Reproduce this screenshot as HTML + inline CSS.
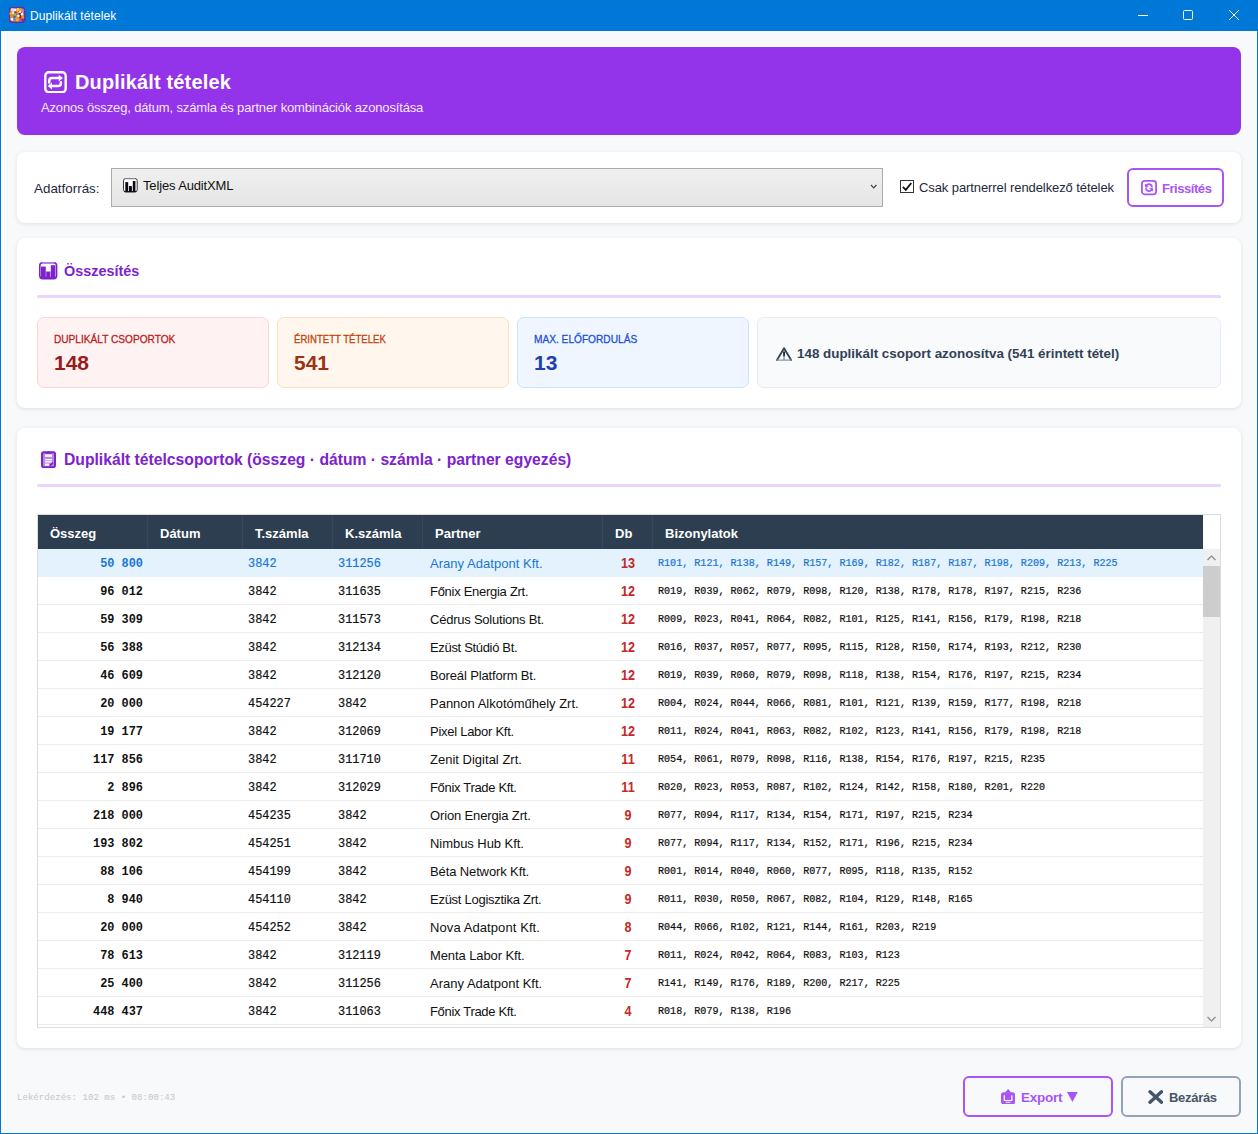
<!DOCTYPE html>
<html lang="hu"><head><meta charset="utf-8"><title>Duplikált tételek</title>
<style>
*{box-sizing:border-box;margin:0;padding:0}
html,body{width:1258px;height:1134px;overflow:hidden}
body{position:relative;background:#f8f9fa;font-family:"Liberation Sans",sans-serif;font-size:13px;color:#1e293b}
.abs{position:absolute}
.win{position:absolute;left:0;top:31px;width:1258px;height:1103px;border:1px solid #0078d7;border-top:none;box-shadow:inset 1px 0 0 #fff,inset -1px 0 0 #fff,inset 0 -1px 0 #fff;pointer-events:none}
.titlebar{position:absolute;left:0;top:0;width:1258px;height:31px;background:#0078d7;color:#fff}
.titlebar .t{position:absolute;left:30px;top:8px;font-size:12px;letter-spacing:.1px;line-height:16px;white-space:nowrap}
.hdr{position:absolute;left:17px;top:47px;width:1224px;height:88px;background:#9333ea;border-radius:8px}
.hdr h1{position:absolute;left:58px;top:22px;font-size:20px;letter-spacing:.15px;line-height:26px;font-weight:bold;color:#fff;white-space:nowrap}
.hdr .sub{position:absolute;left:24px;top:52px;font-size:13px;letter-spacing:-.15px;line-height:18px;color:#f3e8ff;white-space:nowrap}
.card{position:absolute;left:17px;width:1224px;background:#fff;border-radius:8px;box-shadow:0 1px 4px rgba(0,0,0,.1)}
.lbl{position:absolute;white-space:nowrap}
.combo{position:absolute;left:111px;top:168px;width:772px;height:39px;border:1px solid #acacac;background:linear-gradient(#f0f0f0,#e5e5e5)}
.sep{position:absolute;left:37px;width:1184px;height:3px;background:#e9d5ff;border-radius:2px}
.kpi{position:absolute;top:317px;height:71px;border-radius:7px;border:1px solid}
.kpi .l{position:absolute;left:16px;top:14px;font-size:11.6px;line-height:14px;font-weight:normal;white-space:nowrap;transform-origin:0 50%;-webkit-text-stroke:.3px currentColor}
.kpi .v{position:absolute;left:16px;top:32px;font-size:21px;line-height:26px;font-weight:bold;white-space:nowrap}
.h2{position:absolute;left:64px;font-size:15px;line-height:20px;font-weight:bold;color:#7e22ce;white-space:nowrap}
.tbl{position:absolute;left:37px;top:514px;width:1184px;height:514px;border:1px solid #dcdcdc;background:#fff;overflow:hidden}
.thead{position:absolute;left:0;top:0;width:1165px;height:34px;background:#2c3e50;color:#fff;font-weight:bold;font-size:13px}
.thead span{position:absolute;top:0;height:34px;line-height:38px;overflow:hidden;padding-left:12px;border-right:1px solid #34495e;white-space:nowrap}
.rows{position:absolute;left:0;top:34px;width:1165px}
.row{position:relative;height:28px;border-bottom:1px solid #ececec;line-height:27px;white-space:nowrap;color:#111}
.row.sel{background:#e3f2fd;color:#1976d2;border-bottom-color:#e3f2fd}
.row span{position:absolute;top:0}
.mono{font-family:"Liberation Mono",monospace}
.c1{top:2px !important;right:1060px;font-family:"Liberation Mono",monospace;font-weight:bold;font-size:11.9px}
.c3{top:2px !important;left:210px;font-family:"Liberation Mono",monospace;font-size:11.9px;-webkit-text-stroke:.2px currentColor}
.c4{top:2px !important;left:300px;font-family:"Liberation Mono",monospace;font-size:11.9px;-webkit-text-stroke:.2px currentColor}
.c5{top:1px !important;left:392px;font-size:13px}
.c6{top:1px !important;left:564px;width:52px;text-align:center;font-weight:bold;color:#c62828;font-size:14.5px;transform:scaleX(.87)}
.c7{top:1px !important;left:620px;font-family:"Liberation Mono",monospace;font-size:10.08px;-webkit-text-stroke:.2px currentColor}
.row.sel .c6{color:#c62828}
.sb{position:absolute;left:1165px;top:34px;width:17px;height:478px;background:#f0f0f0}
.sb .thumb{position:absolute;left:0;top:17px;width:17px;height:51px;background:#cdcdcd}
.btn{position:absolute;top:1076px;height:41px;border:2px solid;border-radius:6px;background:#f8f9fa;font-size:13px;font-weight:bold}
.btn .tx{position:absolute;top:10px;line-height:20px;white-space:nowrap}
.status{position:absolute;left:17px;top:1092px;font-family:"Liberation Mono",monospace;font-size:9.1px;line-height:12px;color:#c3c6cc;white-space:nowrap}

</style></head>
<body>
<div class="titlebar">
<svg class="abs" style="left:9px;top:7px" width="17" height="17" viewBox="-0.4 -0.5 17 17"><g><rect width="15.2" height="14.8" rx="3.2" fill="#e8872a"/><rect x="0" y="0" width="15.2" height="14.8" rx="3.2" fill="none" stroke="#6a2aa8" stroke-width="1.6"/><circle cx="3" cy="2.3" r="1.7" fill="#bfe3ff"/><circle cx="5.6" cy="2.6" r="1.5" fill="#e9f6ff"/><circle cx="8.6" cy="2" r="1.4" fill="#ffd43a"/><circle cx="11" cy="1.9" r="1.2" fill="#f7a21b"/><circle cx="13.3" cy="2.8" r="1.5" fill="#b07be0"/><circle cx="1.6" cy="6" r="1.6" fill="#f9a61c"/><circle cx="3.8" cy="5.3" r="1.4" fill="#d9f3ff"/><circle cx="6" cy="5" r="1.2" fill="#b0206e"/><circle cx="11.3" cy="4.8" r="1.8" fill="#f6e6e0"/><circle cx="12.1" cy="4.6" r="0.7" fill="#2a0b3f"/><circle cx="5.6" cy="7.2" r="1.4" fill="#9acb1e"/><circle cx="7.2" cy="6.9" r="0.9" fill="#1d8fe8"/><circle cx="10.5" cy="7" r="1.5" fill="#4a1148"/><circle cx="12.6" cy="6.8" r="1.3" fill="#ffffff"/><circle cx="9" cy="8.5" r="1.4" fill="#fff1c9"/><circle cx="2" cy="9.5" r="1.4" fill="#f08a1d"/><circle cx="5.2" cy="9.3" r="1.2" fill="#3a55e0"/><circle cx="7.6" cy="10.5" r="1.5" fill="#f7941d"/><circle cx="11" cy="9.8" r="1.3" fill="#8a2a2a"/><circle cx="13.4" cy="9.7" r="1.3" fill="#f39a3a"/><circle cx="2.8" cy="11.8" r="1.5" fill="#fbeff4"/><circle cx="5" cy="11.8" r="1.2" fill="#27a0f0"/><circle cx="8" cy="12.6" r="1.4" fill="#ffb52e"/><circle cx="11.2" cy="12.4" r="1.5" fill="#a44fc0"/><circle cx="13.3" cy="12.2" r="1.1" fill="#7a2a86"/></g></svg>
<span class="t">Duplikált tételek</span>
<svg class="abs" style="left:1120px;top:0" width="138" height="31" viewBox="0 0 138 31" fill="none" stroke="#fff" stroke-width="1"><path d="M18 15.5h10"/><rect x="63.5" y="10.5" width="9" height="9" rx="1"/><path d="M109 10l10 10M119 10l-10 10"/></svg>
</div>
<div class="hdr">
<svg class="abs" style="left:27px;top:23.6px" width="23" height="22.4" viewBox="0 0 23 22.4" fill="none" stroke="#fff" stroke-width="2.4" stroke-linecap="round" stroke-linejoin="round"><rect x="1.3" y="1.3" width="20.4" height="19.8" rx="3.4"/><g transform="translate(0,-0.7)"><path d="M5.2 12.2V10.6a2.8 2.8 0 0 1 2.8-2.8h8M16.9 12v.9a2.8 2.8 0 0 1-2.8 2.8H6.5" stroke-width="2.5"/><path d="M14.7 4.4l4.3 3.4-4.3 3.4zM8 12.3l-4.3 3.4 4.3 3.4z" fill="#fff" stroke="none"/></g></svg>
<h1>Duplikált tételek</h1>
<div class="sub">Azonos összeg, dátum, számla és partner kombinációk azonosítása</div>
</div>

<div class="card" style="top:152px;height:71px"></div>
<span class="lbl" style="left:34px;top:180px;font-size:13.4px;line-height:18px;color:#1e293b">Adatforrás:</span>
<div class="combo">
<svg class="abs" style="left:11px;top:9px" width="15" height="15" viewBox="0 0 15 15"><rect x="0.5" y="0.5" width="13.7" height="13.5" rx="2.2" fill="#fff" stroke="#3a3a3a" stroke-width="1"/><path d="M2.5 0.9h9.7" stroke="#b5b5b5" stroke-width="1"/><rect x="2.3" y="4.1" width="2.9" height="9.6" fill="#0a0a14"/><rect x="6" y="8.1" width="2.9" height="5.6" fill="#0a0a14"/><rect x="9.8" y="3" width="2.6" height="10.7" fill="#0a0a14"/><path d="M1.5 13.6h11.7" stroke="#0a0a14" stroke-width="1"/></svg>
<span class="lbl" style="left:31px;top:8px;font-size:13px;letter-spacing:-.14px;line-height:18px;color:#111">Teljes AuditXML</span>
<svg class="abs" style="left:758px;top:15px" width="8" height="6" viewBox="0 0 8 6" fill="none" stroke="#444" stroke-width="1.2"><path d="M1 1l2.7 2.9L6.4 1"/></svg>
</div>
<div class="abs" style="left:900px;top:180px;width:14px;height:13px;border:1px solid #333;background:#fff"></div>
<svg class="abs" style="left:900px;top:180px" width="14" height="13" viewBox="0 0 14 13" fill="none" stroke="#111" stroke-width="1.8"><path d="M2.8 6.8l3 3L11.3 3"/></svg>
<span class="lbl" style="left:919px;top:179px;font-size:13px;letter-spacing:-.09px;line-height:18px;color:#1e293b">Csak partnerrel rendelkező tételek</span>
<div class="abs" style="left:1127px;top:168px;width:97px;height:39px;border:2px solid #a855f7;border-radius:6px;background:#fff"></div>
<svg class="abs" style="left:1140.8px;top:180.4px" width="16" height="15.2" viewBox="0 0 16 15.2" fill="none" stroke="#a855f7" stroke-width="1.8" stroke-linecap="round" stroke-linejoin="round"><rect x="0.9" y="0.9" width="14.2" height="13.4" rx="2.8"/><g transform="translate(8 7.6) scale(.82) translate(-8 -7.6)"><path d="M11.6 6.3a3.8 3.8 0 0 0-6.8-1.3M4.4 9a3.8 3.8 0 0 0 6.8 1.3" stroke-width="2.3"/><path d="M3.6 3.8v3h3zM12.4 11.5v-3h-3z" fill="#a855f7" stroke-width="1"/></g></svg>
<span class="lbl" style="left:1162px;top:180px;font-size:13px;letter-spacing:-.45px;line-height:18px;font-weight:bold;color:#a855f7">Frissítés</span>

<div class="card" style="top:238px;height:170px"></div>
<svg class="abs" style="left:39.3px;top:262.2px" width="18.4" height="17.4" viewBox="0 0 18.4 17.4"><rect x="0.8" y="0.8" width="16.8" height="15.8" rx="2.8" fill="#fff" stroke="#7e22ce" stroke-width="1.6"/><path d="M3.2 0.8h12" stroke="#b57edc" stroke-width="1.6"/><rect x="2" y="4.6" width="4.8" height="11.6" fill="#7e22ce"/><rect x="7.2" y="9.5" width="4.2" height="6.7" fill="#7e22ce"/><rect x="11.8" y="3.2" width="4.6" height="13" fill="#7e22ce"/><path d="M2 15.8h14.4" stroke="#7e22ce" stroke-width="1.6"/></svg>
<span class="h2" style="top:261px;font-size:14.4px">Összesítés</span>
<div class="sep" style="top:295px"></div>

<div class="kpi" style="left:37px;width:232px;background:#fef2f2;border-color:#fed5d5"><span class="l" style="color:#b91c1c;transform:scaleX(.873)">DUPLIKÁLT CSOPORTOK</span><span class="v" style="color:#991b1b">148</span></div>
<div class="kpi" style="left:277px;width:232px;background:#fff7ed;border-color:#fee0bd"><span class="l" style="color:#c2410c;transform:scaleX(.8276)">ÉRINTETT TÉTELEK</span><span class="v" style="color:#9a3412">541</span></div>
<div class="kpi" style="left:517px;width:232px;background:#eff6ff;border-color:#cde2fe"><span class="l" style="color:#1d4ed8;transform:scaleX(.875)">MAX. ELŐFORDULÁS</span><span class="v" style="color:#1e40af">13</span></div>
<div class="kpi" style="left:757px;width:464px;background:#f8fafc;border-color:#e7ecf2"></div>
<svg class="abs" style="left:775px;top:346px" width="18" height="16" viewBox="0 0 18 16" fill="none" stroke="#334155" stroke-linejoin="round" stroke-linecap="round"><path d="M2 14L9.06 2.3L16.1 14" stroke-width="1.8"/><path d="M2 14.1h14.1" stroke="#8a96a6" stroke-width="1.3"/><path d="M9.06 6.2v3.5" stroke-width="1.9" stroke="#1e293b"/><path d="M9.06 10.5v3" stroke-width="1.5" stroke="#8a96a6"/></svg>
<span class="lbl" style="left:797px;top:345px;font-size:13.4px;line-height:18px;font-weight:bold;color:#334155">148 duplikált csoport azonosítva (541 érintett tétel)</span>

<div class="card" style="top:428px;height:620px"></div>
<svg class="abs" style="left:41px;top:451px" width="15" height="17.2" viewBox="0 0 15 17.2"><rect x="1" y="1.2" width="13" height="15" rx="1.6" fill="#b98ae0" stroke="#7e22ce" stroke-width="2"/><path d="M4.5 1.8L7.5 0l3 1.8v1H4.5z" fill="#7e22ce"/><rect x="4" y="3.4" width="7" height="2.4" fill="#fff"/><rect x="4" y="8" width="7" height="1.3" fill="#fff"/><rect x="4" y="10.2" width="7" height="1.3" fill="#fff"/><rect x="4" y="12.6" width="4" height="2.2" fill="#fff"/><path d="M9 14.6l3-3" stroke="#7e22ce" stroke-width="1.6"/></svg>
<span class="h2" style="top:450px;font-size:15.7px">Duplikált tételcsoportok (összeg · dátum · számla · partner egyezés)</span>
<div class="sep" style="top:484px"></div>

<div class="tbl">
<div class="thead"><span style="left:0;width:110px">Összeg</span><span style="left:110px;width:95px">Dátum</span><span style="left:205px;width:90px">T.számla</span><span style="left:295px;width:90px">K.számla</span><span style="left:385px;width:180px">Partner</span><span style="left:565px;width:50px">Db</span><span style="left:615px;width:550px;border-right:none">Bizonylatok</span></div>
<div class="rows">
<div class="row sel"><span class="c1">50 800</span><span class="c3">3842</span><span class="c4">311256</span><span class="c5" style="letter-spacing:0.03px">Arany Adatpont Kft.</span><span class="c6">13</span><span class="c7">R101, R121, R138, R149, R157, R169, R182, R187, R187, R198, R209, R213, R225</span></div>
<div class="row"><span class="c1">96 012</span><span class="c3">3842</span><span class="c4">311635</span><span class="c5" style="letter-spacing:-0.28px">Főnix Energia Zrt.</span><span class="c6">12</span><span class="c7">R019, R039, R062, R079, R098, R120, R138, R178, R178, R197, R215, R236</span></div>
<div class="row"><span class="c1">59 309</span><span class="c3">3842</span><span class="c4">311573</span><span class="c5" style="letter-spacing:-0.23px">Cédrus Solutions Bt.</span><span class="c6">12</span><span class="c7">R009, R023, R041, R064, R082, R101, R125, R141, R156, R179, R198, R218</span></div>
<div class="row"><span class="c1">56 388</span><span class="c3">3842</span><span class="c4">312134</span><span class="c5" style="letter-spacing:-0.33px">Ezüst Stúdió Bt.</span><span class="c6">12</span><span class="c7">R016, R037, R057, R077, R095, R115, R128, R150, R174, R193, R212, R230</span></div>
<div class="row"><span class="c1">46 609</span><span class="c3">3842</span><span class="c4">312120</span><span class="c5" style="letter-spacing:-0.15px">Boreál Platform Bt.</span><span class="c6">12</span><span class="c7">R019, R039, R060, R079, R098, R118, R138, R154, R176, R197, R215, R234</span></div>
<div class="row"><span class="c1">20 000</span><span class="c3">454227</span><span class="c4">3842</span><span class="c5" style="letter-spacing:-0.01px">Pannon Alkotóműhely Zrt.</span><span class="c6">12</span><span class="c7">R004, R024, R044, R066, R081, R101, R121, R139, R159, R177, R198, R218</span></div>
<div class="row"><span class="c1">19 177</span><span class="c3">3842</span><span class="c4">312069</span><span class="c5" style="letter-spacing:-0.27px">Pixel Labor Kft.</span><span class="c6">12</span><span class="c7">R011, R024, R041, R063, R082, R102, R123, R141, R156, R179, R198, R218</span></div>
<div class="row"><span class="c1">117 856</span><span class="c3">3842</span><span class="c4">311710</span><span class="c5" style="letter-spacing:0.01px">Zenit Digital Zrt.</span><span class="c6">11</span><span class="c7">R054, R061, R079, R098, R116, R138, R154, R176, R197, R215, R235</span></div>
<div class="row"><span class="c1">2 896</span><span class="c3">3842</span><span class="c4">312029</span><span class="c5" style="letter-spacing:-0.32px">Főnix Trade Kft.</span><span class="c6">11</span><span class="c7">R020, R023, R053, R087, R102, R124, R142, R158, R180, R201, R220</span></div>
<div class="row"><span class="c1">218 000</span><span class="c3">454235</span><span class="c4">3842</span><span class="c5" style="letter-spacing:-0.14px">Orion Energia Zrt.</span><span class="c6">9</span><span class="c7">R077, R094, R117, R134, R154, R171, R197, R215, R234</span></div>
<div class="row"><span class="c1">193 802</span><span class="c3">454251</span><span class="c4">3842</span><span class="c5" style="letter-spacing:-0.05px">Nimbus Hub Kft.</span><span class="c6">9</span><span class="c7">R077, R094, R117, R134, R152, R171, R196, R215, R234</span></div>
<div class="row"><span class="c1">88 106</span><span class="c3">454199</span><span class="c4">3842</span><span class="c5" style="letter-spacing:-0.12px">Béta Network Kft.</span><span class="c6">9</span><span class="c7">R001, R014, R040, R060, R077, R095, R118, R135, R152</span></div>
<div class="row"><span class="c1">8 940</span><span class="c3">454110</span><span class="c4">3842</span><span class="c5" style="letter-spacing:-0.27px">Ezüst Logisztika Zrt.</span><span class="c6">9</span><span class="c7">R011, R030, R050, R067, R082, R104, R129, R148, R165</span></div>
<div class="row"><span class="c1">20 000</span><span class="c3">454252</span><span class="c4">3842</span><span class="c5" style="letter-spacing:0.09px">Nova Adatpont Kft.</span><span class="c6">8</span><span class="c7">R044, R066, R102, R121, R144, R161, R203, R219</span></div>
<div class="row"><span class="c1">78 613</span><span class="c3">3842</span><span class="c4">312119</span><span class="c5" style="letter-spacing:-0.1px">Menta Labor Kft.</span><span class="c6">7</span><span class="c7">R011, R024, R042, R064, R083, R103, R123</span></div>
<div class="row"><span class="c1">25 400</span><span class="c3">3842</span><span class="c4">311256</span><span class="c5" style="letter-spacing:0.01px">Arany Adatpont Kft.</span><span class="c6">7</span><span class="c7">R141, R149, R176, R189, R200, R217, R225</span></div>
<div class="row"><span class="c1">448 437</span><span class="c3">3842</span><span class="c4">311063</span><span class="c5" style="letter-spacing:-0.32px">Főnix Trade Kft.</span><span class="c6">4</span><span class="c7">R018, R079, R138, R196</span></div>
<div class="row"></div>
</div>
<div class="sb"><div class="thumb"></div>
<svg class="abs" style="left:4px;top:6px" width="9" height="6" viewBox="0 0 9 6" fill="none" stroke="#888" stroke-width="1.2"><path d="M0.5 5l4-4 4 4"/></svg>
<svg class="abs" style="left:4px;top:467px" width="9" height="6" viewBox="0 0 9 6" fill="none" stroke="#888" stroke-width="1.2"><path d="M0.5 1l4 4 4-4"/></svg>
</div>
</div>

<span class="status">Lekérdezés: 102 ms • 08:00:43</span>
<div class="btn" style="left:963px;width:150px;border-color:#a855f7;color:#a855f7">
<svg class="abs" style="left:35.7px;top:11.1px" width="14.2" height="15.4" viewBox="0 0 14.2 15.4"><rect x="0" y="3.2" width="14.2" height="12.2" rx="2.8" fill="#a855f7"/><path d="M7.1 0L10.3 3.6H3.9z" fill="#a855f7"/><path d="M3.3 6.2v5.3h7.6V6.2" fill="none" stroke="#fff" stroke-width="1.2"/><path d="M7.1 3.5v4.5" stroke="#a855f7" stroke-width="2.6"/><path d="M4.6 13.3h5" stroke="#fff" stroke-width="0.9"/></svg>
<span class="tx" style="left:56px;font-size:13.5px;letter-spacing:-.27px">Export</span>
<svg class="abs" style="left:102px;top:13.9px" width="10.8" height="10" viewBox="0 0 10.8 10"><path d="M0 0h10.8L5.4 10z" fill="#a855f7"/></svg>
</div>
<div class="btn" style="left:1121px;width:120px;border-color:#94a3b8;color:#475569">
<svg class="abs" style="left:24.5px;top:11.9px" width="15.5" height="14" viewBox="0 0 15.5 14" fill="none" stroke="#475569" stroke-width="3.4" stroke-linecap="round"><path d="M2 1.8l11.5 10.4M13.5 1.8L2 12.2"/></svg>
<span class="tx" style="left:46px;letter-spacing:-.3px">Bezárás</span>
</div>
<div class="win"></div>
</body></html>
